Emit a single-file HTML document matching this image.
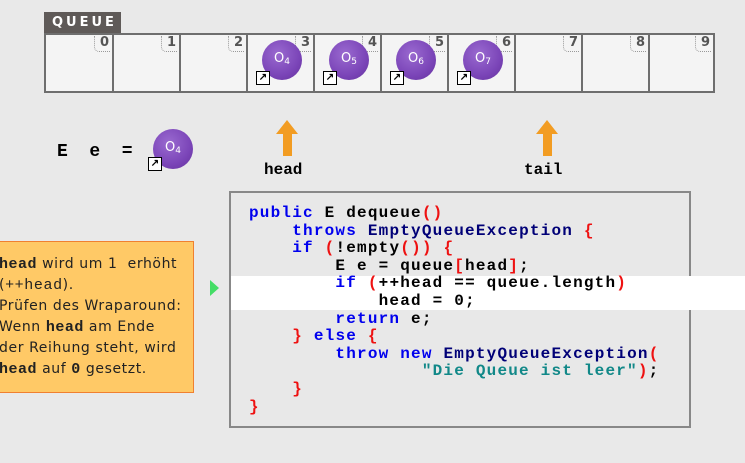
<!DOCTYPE html>
<html><head><style>
body{margin:0;width:745px;height:463px;background:#e9e9e9;position:relative;overflow:hidden;font-family:"Liberation Sans",sans-serif}
.a{position:absolute}
.tab{left:44px;top:12px;width:77px;height:21px;background:#5f5a58;color:#fff;font:bold 13px "DejaVu Sans",sans-serif;letter-spacing:3px;line-height:22px;padding-left:8px;box-sizing:border-box}
.q{left:44px;top:33px;width:671px;height:60px;border:2px solid #6e6e6e;box-sizing:border-box;background:#f4f4f4}
.cell{position:absolute;top:0;height:56px;border-right:2px solid #6e6e6e;box-sizing:border-box}
.idx{position:absolute;right:2px;top:1px;font:bold 13px "DejaVu Sans",sans-serif;color:#555;border-left:1px dotted #999;border-bottom:1px dotted #999;padding:0 1px 2px 5px;line-height:13px;border-bottom-left-radius:5px}
.ball{position:absolute;width:40px;height:40px;border-radius:50%;background:radial-gradient(circle at 40% 35%,#9a6ad0,#7b45b8 60%,#63309c);color:#fff;font:13px "DejaVu Sans",sans-serif;text-align:center;line-height:38px}
.ball sub{font-size:9px;vertical-align:-2px}
.sc{position:absolute;width:12px;height:12px;background:#fff;border:1px solid #000;font:bold 10px sans-serif;line-height:12px;text-align:center;color:#000}
.arrow{position:absolute;width:0;height:0;border-left:11px solid transparent;border-right:11px solid transparent;border-bottom:14px solid #f29c22}
.stem{position:absolute;width:9px;height:22px;background:#f29c22}
.mono{font-family:"Liberation Mono",monospace;font-weight:bold}
.code{left:229px;top:191px;width:462px;height:237px;border:2px solid #888;box-sizing:border-box;background:#e8e8e8}
pre{margin:0;position:absolute;left:249px;top:205px;font:bold 16px/17.6px "Liberation Mono",monospace;letter-spacing:1.2px;color:#000}
.k{color:#0000ee}.r{color:#ee1111}.t{color:#000077}.s{color:#118888}
.note{left:-2px;top:241px;width:196px;height:152px;background:#ffc966;border:1px solid #f08030;box-sizing:border-box;font:14px/21px "DejaVu Sans",sans-serif;letter-spacing:0.6px;color:#222;padding:12px 0 0 0;white-space:nowrap;overflow:hidden}
.note b{font-family:"Liberation Mono",monospace;font-size:15px;letter-spacing:0.5px}
</style></head><body>
<div class="a tab">QUEUE</div>
<div class="a q">
<div class="cell" style="left:0;width:68px"><span class="idx">0</span></div>
<div class="cell" style="left:68px;width:67px"><span class="idx">1</span></div>
<div class="cell" style="left:135px;width:67px"><span class="idx">2</span></div>
<div class="cell" style="left:202px;width:67px"><span class="idx">3</span></div>
<div class="cell" style="left:269px;width:67px"><span class="idx">4</span></div>
<div class="cell" style="left:336px;width:67px"><span class="idx">5</span></div>
<div class="cell" style="left:403px;width:67px"><span class="idx">6</span></div>
<div class="cell" style="left:470px;width:67px"><span class="idx">7</span></div>
<div class="cell" style="left:537px;width:67px"><span class="idx">8</span></div>
<div class="cell" style="left:604px;width:63px;border-right:none"><span class="idx">9</span></div>
</div>
<div class="ball" style="left:262px;top:40px">O<sub>4</sub></div><div class="sc" style="left:256px;top:71px">↗</div>
<div class="ball" style="left:329px;top:40px">O<sub>5</sub></div><div class="sc" style="left:323px;top:71px">↗</div>
<div class="ball" style="left:396px;top:40px">O<sub>6</sub></div><div class="sc" style="left:390px;top:71px">↗</div>
<div class="ball" style="left:463px;top:40px">O<sub>7</sub></div><div class="sc" style="left:457px;top:71px">↗</div>

<div class="a mono" style="left:57px;top:142px;font-size:18px;letter-spacing:0">E&nbsp; e&nbsp; =</div>
<div class="ball" style="left:153px;top:129px">O<sub>4</sub></div><div class="sc" style="left:148px;top:157px">↗</div>

<div class="arrow" style="left:276px;top:120px"></div><div class="stem" style="left:283px;top:134px"></div>
<div class="a mono" style="left:264px;top:161px;font-size:16px">head</div>
<div class="arrow" style="left:536px;top:120px"></div><div class="stem" style="left:543px;top:134px"></div>
<div class="a mono" style="left:524px;top:161px;font-size:16px">tail</div>

<div class="a code"></div>
<div class="a" style="left:231px;top:276px;width:514px;height:34px;background:#fff"></div>
<pre><span class="k">public</span> E dequeue<span class="r">()</span>
    <span class="k">throws</span> <span class="t">EmptyQueueException</span> <span class="r">{</span>
    <span class="k">if</span> <span class="r">(</span>!empty<span class="r">())</span> <span class="r">{</span>
        E e = queue<span class="r">[</span>head<span class="r">]</span>;
        <span class="k">if</span> <span class="r">(</span>++head == queue.length<span class="r">)</span>
            head = 0;
        <span class="k">return</span> e;
    <span class="r">}</span> <span class="k">else</span> <span class="r">{</span>
        <span class="k">throw</span> <span class="k">new</span> <span class="t">EmptyQueueException</span><span class="r">(</span>
                <span class="s">"Die Queue ist leer"</span><span class="r">)</span>;
    <span class="r">}</span>
<span class="r">}</span></pre>
<div class="a" style="left:210px;top:280px;width:0;height:0;border-top:8px solid transparent;border-bottom:8px solid transparent;border-left:9px solid #44dd66"></div>
<div class="a note"><b>head</b> wird um 1&nbsp; erhöht<br>(<span style="font-family:'Liberation Mono',monospace;font-size:15px">++head</span>).<br>Prüfen des Wraparound:<br>Wenn <b>head</b> am Ende<br>der Reihung steht, wird<br><b>head</b> auf <b>0</b> gesetzt.</div>
</body></html>
